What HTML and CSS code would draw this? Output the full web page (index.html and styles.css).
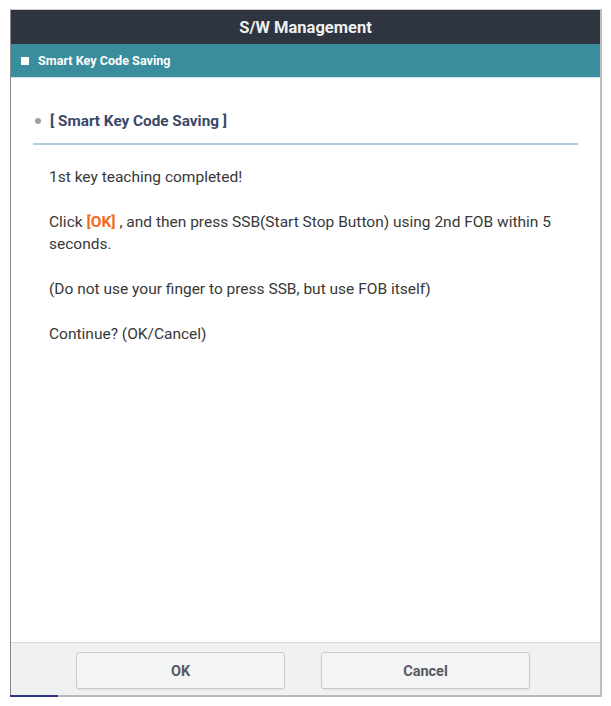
FILE: index.html
```html
<!DOCTYPE html>
<html>
<head>
<meta charset="utf-8">
<link rel="stylesheet" href="styles.css">
</head>
<body>
<div class="dialog">
  <div class="titlebar">S/W Management</div>
  <div class="subbar"><span class="square"></span><span>Smart Key Code Saving</span></div>
  <div class="content">
    <div class="heading"><span class="dot"></span><span>[ Smart Key Code Saving ]</span></div>
    <div class="message">
      <p>1st key teaching completed!</p>
      <p>Click <span class="ok">[OK]</span> , and then press SSB(Start Stop Button) using 2nd FOB within 5 seconds.</p>
      <p>(Do not use your finger to press SSB, but use FOB itself)</p>
      <p>Continue? (OK/Cancel)</p>
    </div>
  </div>
  <div class="footer">
    <button class="btn">OK</button>
    <button class="btn">Cancel</button>
  </div>
</div>
</body>
</html>
```
FILE: styles.css
```css
html, body {
  margin: 0;
  padding: 0;
  background: #ffffff;
}
body {
  font-family: Roboto, "Liberation Sans", sans-serif;
}
.dialog {
  position: relative;
  margin: 9px 0 0 10px;
  width: 592px;
  height: 688px;
  box-sizing: border-box;
  border-top: 1px solid #c9c9c9;
  border-left: 1px solid #8a8a8a;
  border-right: 2px solid #bcbcbc;
  border-bottom: 2px solid #b8b8b8;
  display: flex;
  flex-direction: column;
  background: #fff;
}
.dialog::after {
  content: "";
  position: absolute;
  left: -1px;
  bottom: -2px;
  width: 48px;
  height: 2px;
  background: #2b3580;
}
.titlebar {
  height: 34px;
  background: #2e3440;
  color: #eef0f2;
  font-weight: 700;
  font-size: 16.5px;
  display: flex;
  align-items: center;
  justify-content: center;
  padding-top: 1px;
  box-sizing: border-box;
}
.subbar {
  height: 34px;
  background: #3a8d9d;
  border-bottom: 1px solid #cfe4e8;
  box-sizing: border-box;
  color: #ffffff;
  font-weight: 700;
  font-size: 12.6px;
  display: flex;
  align-items: center;
  gap: 9px;
  padding-left: 10px;
}
.square {
  width: 8px;
  height: 8px;
  background: #ffffff;
}
.content {
  flex: 1;
  padding: 0 22px 0 22px;
}
.heading {
  margin-top: 34px;
  height: 31px;
  border-bottom: 2px solid #a9d1d9;
  display: flex;
  align-items: flex-start;
  gap: 9px;
  padding-left: 2px;
  color: #3b4868;
  font-weight: 700;
  font-size: 15.3px;
  line-height: 18px;
}
.dot {
  width: 6px;
  height: 6px;
  border-radius: 50%;
  background: #9a9fa6;
  margin-top: 6px;
}
.message {
  padding-left: 16px;
  padding-top: 21px;
  color: #383838;
  font-size: 15.5px;
  line-height: 22px;
}
.message p {
  margin: 0 0 23px 0;
}
.ok {
  color: #f26a1b;
  font-weight: 700;
}
.footer {
  height: 53px;
  box-sizing: border-box;
  border-top: 1px solid #d6d8db;
  background: #f0f1f3;
  display: flex;
  justify-content: center;
  align-items: flex-start;
  gap: 36px;
  padding-top: 9px;
  padding-right: 5px;
}
.btn {
  width: 209px;
  height: 37px;
  padding-top: 3px;
  background: #f3f4f6;
  border: 1px solid #c9cbce;
  border-radius: 3px;
  font-family: Roboto, "Liberation Sans", sans-serif;
  font-weight: 700;
  font-size: 14.5px;
  color: #555a60;
  box-shadow: 0 1px 1px rgba(0,0,0,0.08);
}
```
